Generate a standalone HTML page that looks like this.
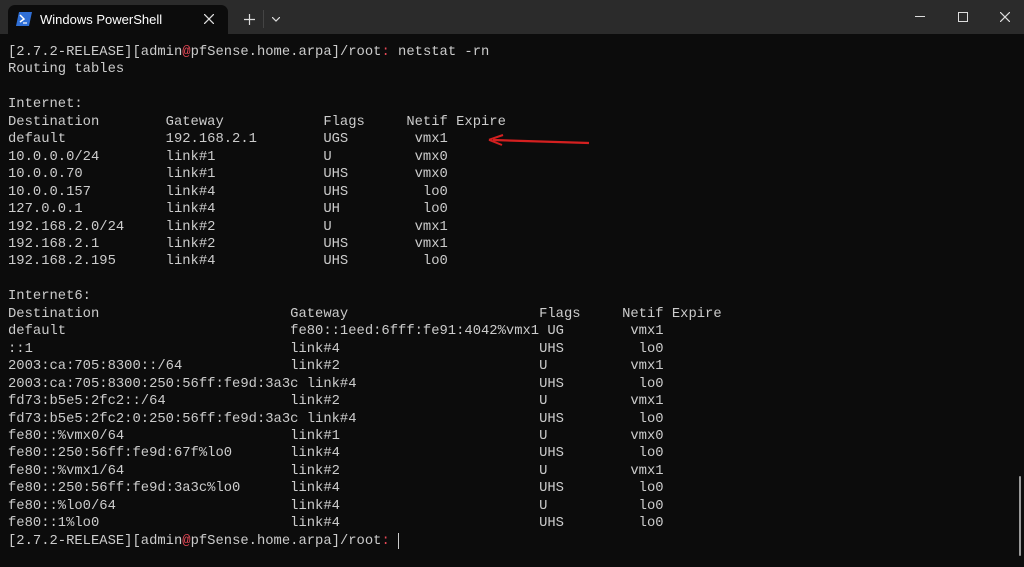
<!DOCTYPE html>
<html><head><meta charset="utf-8"><style>
html,body{margin:0;padding:0;width:1024px;height:567px;overflow:hidden;background:#0c0c0c;}
.tb{position:absolute;left:0;top:0;width:1024px;height:34px;background:#2b2b2b;}
.tab{position:absolute;left:8px;top:5px;width:220px;height:29px;background:#0c0c0c;border-radius:7px 7px 0 0;}
.tt{position:absolute;left:40px;top:12px;color:#fff;font:13px "Liberation Sans",sans-serif;}
pre{position:absolute;left:8px;top:44px;margin:0;font:13.83px/17.46px "Liberation Mono",monospace;color:#cccccc;}
.r{color:#e74856}
</style></head><body>
<div class="tb">
<div class="tab"></div>
<svg style="position:absolute;left:16px;top:12px" width="16" height="14" viewBox="0 0 16 14"><path d="M3 0H16L13 14H0Z" fill="#2f6fd6"/><path d="M4 3L8 7L4 10" stroke="#fff" stroke-width="1.5" fill="none"/><path d="M7 11H11" stroke="#fff" stroke-width="1.2"/></svg>
<div class="tt">Windows PowerShell</div>
<svg style="position:absolute;left:204px;top:14px" width="10" height="10"><path d="M0 0L10 10M10 0L0 10" stroke="#ddd" stroke-width="1.3"/></svg>
<svg style="position:absolute;left:244px;top:14px" width="11" height="11"><path d="M5.5 0V11M0 5.5H11" stroke="#ddd" stroke-width="1.2"/></svg>
<div style="position:absolute;left:263px;top:10px;width:1px;height:18px;background:#444"></div>
<svg style="position:absolute;left:272px;top:17px" width="8" height="5"><path d="M0 0L4 4L8 0" stroke="#ddd" stroke-width="1.2" fill="none"/></svg>
<div style="position:absolute;left:915px;top:16px;width:10px;height:1px;background:#ddd"></div>
<div style="position:absolute;left:958px;top:12px;width:8px;height:8px;border:1px solid #ddd"></div>
<svg style="position:absolute;left:1000px;top:12px" width="10" height="10"><path d="M0 0L10 10M10 0L0 10" stroke="#ddd" stroke-width="1.2"/></svg>
</div>
<pre>[2.7.2-RELEASE][admin<span class="r">@</span>pfSense.home.arpa]/root<span class="r">:</span> netstat -rn
Routing tables

Internet:
Destination        Gateway            Flags     Netif Expire
default            192.168.2.1        UGS        vmx1
10.0.0.0/24        link#1             U          vmx0
10.0.0.70          link#1             UHS        vmx0
10.0.0.157         link#4             UHS         lo0
127.0.0.1          link#4             UH          lo0
192.168.2.0/24     link#2             U          vmx1
192.168.2.1        link#2             UHS        vmx1
192.168.2.195      link#4             UHS         lo0

Internet6:
Destination                       Gateway                       Flags     Netif Expire
default                           fe80::1eed:6fff:fe91:4042%vmx1 UG        vmx1
::1                               link#4                        UHS         lo0
2003:ca:705:8300::/64             link#2                        U          vmx1
2003:ca:705:8300:250:56ff:fe9d:3a3c link#4                      UHS         lo0
fd73:b5e5:2fc2::/64               link#2                        U          vmx1
fd73:b5e5:2fc2:0:250:56ff:fe9d:3a3c link#4                      UHS         lo0
fe80::%vmx0/64                    link#1                        U          vmx0
fe80::250:56ff:fe9d:67f%lo0       link#4                        UHS         lo0
fe80::%vmx1/64                    link#2                        U          vmx1
fe80::250:56ff:fe9d:3a3c%lo0      link#4                        UHS         lo0
fe80::%lo0/64                     link#4                        U           lo0
fe80::1%lo0                       link#4                        UHS         lo0
[2.7.2-RELEASE][admin<span class="r">@</span>pfSense.home.arpa]/root<span class="r">:</span> <span style="border-left:1px solid #ccc"> </span></pre>
<svg style="position:absolute;left:485px;top:132px" width="110" height="20"><path d="M104 11L8 8" stroke="#d42020" stroke-width="2.2" fill="none"/><path d="M4 7.8L18 3M4 7.8L17 13" stroke="#d42020" stroke-width="2" fill="none"/></svg>
<div style="position:absolute;left:1019px;top:476px;width:2px;height:80px;background:#9a9a9a;border-radius:1px"></div>
</body></html>
